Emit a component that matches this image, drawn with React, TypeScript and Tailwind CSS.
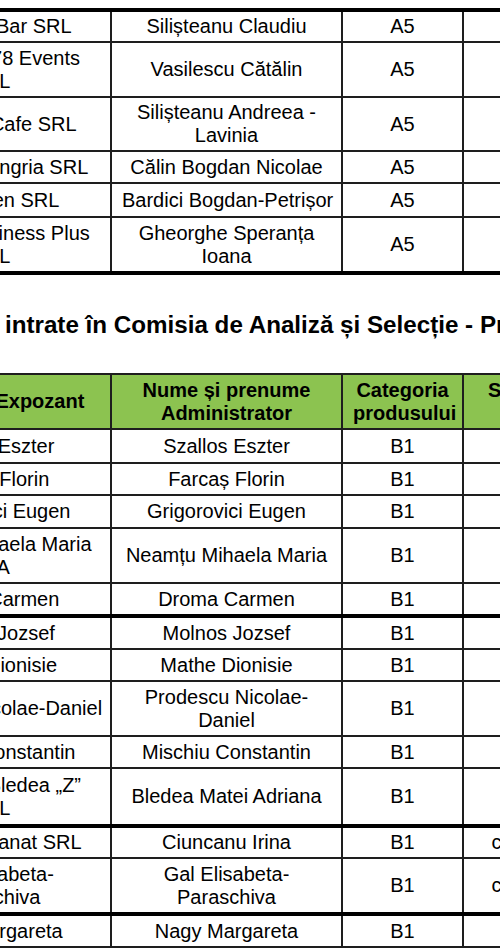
import React from 'react'

type Row = {
  name: string[]
  admin: string[]
  cat: string
  status?: string
  h: string
  thick?: boolean
}

const firstRows: Row[] = [
  { name: ['Premium Bar SRL'], admin: ['Silișteanu Claudiu'], cat: 'A5', h: 'h-[32px]' },
  { name: ['Elegance 78 Events', 'SRL'], admin: ['Vasilescu Cătălin'], cat: 'A5', h: 'h-[55px]' },
  { name: ['Chocolat Cafe SRL'], admin: ['Silișteanu Andreea -', 'Lavinia'], cat: 'A5', h: 'h-[54px]' },
  { name: ['Delicii din Ungria SRL'], admin: ['Călin Bogdan Nicolae'], cat: 'A5', h: 'h-[32px]' },
  { name: ['Evergreen SRL'], admin: ['Bardici Bogdan-Petrișor'], cat: 'A5', h: 'h-[34px]' },
  { name: ['Victoria Business Plus', 'SRL'], admin: ['Gheorghe Speranța', 'Ioana'], cat: 'A5', h: 'h-[56px]' },
]

const secondRows: Row[] = [
  { name: ['Szallos Eszter'], admin: ['Szallos Eszter'], cat: 'B1', h: 'h-[34px]' },
  { name: ['Farcaș Florin'], admin: ['Farcaș Florin'], cat: 'B1', h: 'h-[32px]' },
  { name: ['Grigorovici Eugen'], admin: ['Grigorovici Eugen'], cat: 'B1', h: 'h-[33px]' },
  { name: ['Neamțu Mihaela Maria', 'PFA'], admin: ['Neamțu Mihaela Maria'], cat: 'B1', h: 'h-[55px]' },
  { name: ['Droma Carmen'], admin: ['Droma Carmen'], cat: 'B1', h: 'h-[33px]' },
  { name: ['Molnos Jozsef'], admin: ['Molnos Jozsef'], cat: 'B1', h: 'h-[33px]', thick: true },
  { name: ['Mathe Dionisie'], admin: ['Mathe Dionisie'], cat: 'B1', h: 'h-[32px]' },
  { name: ['Prodescu Nicolae-Daniel'], admin: ['Prodescu Nicolae-', 'Daniel'], cat: 'B1', h: 'h-[55px]' },
  { name: ['Mischiu Constantin'], admin: ['Mischiu Constantin'], cat: 'B1', h: 'h-[32px]' },
  { name: ['Cofetăria Bledea „Z”', 'SRL'], admin: ['Bledea Matei Adriana'], cat: 'B1', h: 'h-[58px]' },
  { name: ['Pâine de Banat SRL'], admin: ['Ciuncanu Irina'], cat: 'B1', status: 'conform', h: 'h-[32px]', thick: true },
  { name: ['Gal Elisabeta-', 'Paraschiva'], admin: ['Gal Elisabeta-', 'Paraschiva'], cat: 'B1', status: 'conform', h: 'h-[56px]' },
  { name: ['Nagy Margareta'], admin: ['Nagy Margareta'], cat: 'B1', h: 'h-[33px]', thick: true },
]

function Lines({ lines }: { lines: string[] }) {
  return (
    <>
      {lines.map((l, i) => (
        <div key={i} className="whitespace-nowrap">
          {l}
        </div>
      ))}
    </>
  )
}

const cell = 'border-2 border-[#1e1e1e] px-[10px] py-0 text-center align-middle'

function Cols() {
  return (
    <colgroup>
      <col className="w-[240px]" />
      <col className="w-[231px]" />
      <col className="w-[121px]" />
      <col className="w-[129px]" />
    </colgroup>
  )
}

function Body({ rows }: { rows: Row[] }) {
  return (
    <tbody>
      {rows.map((r, i) => {
        const top = r.thick ? 'border-t-[4px] border-t-black' : ''
        return (
          <tr key={i} className={r.h}>
            <td className={`${cell} ${top}`}>
              <Lines lines={r.name} />
            </td>
            <td className={`${cell} ${top}`}>
              <Lines lines={r.admin} />
            </td>
            <td className={`${cell} ${top}`}>{r.cat}</td>
            <td className={`${cell} ${top}`}>{r.status}</td>
          </tr>
        )
      })}
    </tbody>
  )
}

export default function App() {
  return (
    <div className="h-[948px] w-[500px] overflow-hidden bg-white">
      <div className="-ml-[130px] w-[800px] pt-[8px] font-['Liberation_Sans',Arial,sans-serif] text-[20px] leading-[23px] text-black">
        <table className="w-[721px] table-fixed border-collapse border-t-[4px] border-b-[4px] border-black">
          <Cols />
          <Body rows={firstRows} />
        </table>

        <h2 className="-ml-[25px] mt-[36px] mb-[34px] whitespace-nowrap text-[24.2px] font-bold leading-[28px]">
          Lista firmelor intrate în Comisia de Analiză și Selecție - Produse alimentare
        </h2>

        <table className="w-[721px] table-fixed border-collapse">
          <Cols />
          <thead>
            <tr className="h-[55px] bg-[#8cc350] font-bold">
              <th className={cell}>Denumire Expozant</th>
              <th className={cell}>
                <Lines lines={['Nume și prenume', 'Administrator']} />
              </th>
              <th className={cell}>
                <Lines lines={['Categoria', 'produsului']} />
              </th>
              <th className={cell}>
                <Lines lines={['Statusul', 'final']} />
              </th>
            </tr>
          </thead>
          <Body rows={secondRows} />
        </table>
      </div>
    </div>
  )
}
